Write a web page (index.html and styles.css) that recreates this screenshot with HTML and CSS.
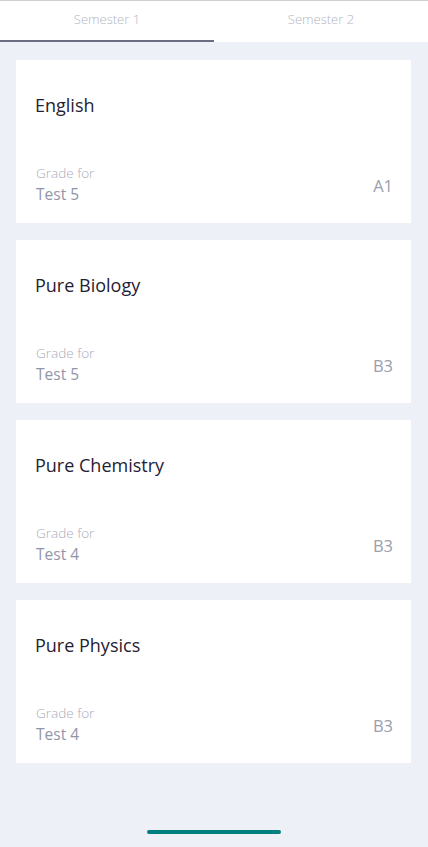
FILE: index.html
```html
<!DOCTYPE html>
<html>
<head>
<meta charset="utf-8">
<link rel="stylesheet" href="styles.css">
</head>
<body>
<div class="screen">
  <div class="tabs">
    <div class="tab active">Semester 1</div>
    <div class="tab">Semester 2</div>
  </div>
  <div class="list">
    <div class="card">
      <div class="title">English</div>
      <div class="foot">
        <div class="meta"><div class="label">Grade for</div><div class="test">Test 5</div></div>
        <div class="grade">A1</div>
      </div>
    </div>
    <div class="card">
      <div class="title">Pure Biology</div>
      <div class="foot">
        <div class="meta"><div class="label">Grade for</div><div class="test">Test 5</div></div>
        <div class="grade">B3</div>
      </div>
    </div>
    <div class="card">
      <div class="title">Pure Chemistry</div>
      <div class="foot">
        <div class="meta"><div class="label">Grade for</div><div class="test">Test 4</div></div>
        <div class="grade">B3</div>
      </div>
    </div>
    <div class="card">
      <div class="title">Pure Physics</div>
      <div class="foot">
        <div class="meta"><div class="label">Grade for</div><div class="test">Test 4</div></div>
        <div class="grade">B3</div>
      </div>
    </div>
  </div>
  <div class="home"></div>
</div>
</body>
</html>
```
FILE: styles.css
```css
* { box-sizing: border-box; }
html, body { margin: 0; padding: 0; }
body {
  font-family: "Open Sans", "Lato", sans-serif;
  background: #edf0f7;
}
.screen {
  height: 847px;
  display: flex;
  flex-direction: column;
  border-top: 1px solid #cfd0d3;
}
.tabs {
  display: flex;
  background: #fff;
  height: 41px;
}
.tab {
  flex: 1;
  display: flex;
  align-items: center;
  justify-content: center;
  font-size: 13px;
  color: #b3b5c3;
  font-weight: 300;
  padding-bottom: 3px;
  border-bottom: 2px solid transparent;
}
.tab.active { border-bottom-color: #6a6e80; }
.list {
  display: flex;
  flex-direction: column;
  gap: 17px;
  padding: 18px 17px 0 16px;
}
.card {
  background: #fff;
  height: 163px;
  padding: 34px 18px 18px 19px;
}
.title {
  font-size: 18px;
  line-height: 22px;
  font-weight: 500;
  color: #1f2233;
}
.foot {
  margin-top: 47px;
  display: flex;
  align-items: center;
  justify-content: space-between;
}
.meta { padding-left: 1px; }
.label {
  font-size: 13.5px;
  line-height: 20px;
  color: #a9acbb;
  font-weight: 300;
}
.test {
  font-size: 15.5px;
  line-height: 22px;
  color: #9195a8;
}
.grade {
  font-size: 16.5px;
  color: #9a9eaf;
  padding-top: 2px;
}
.home {
  margin: auto auto 13px;
  width: 134px;
  height: 4px;
  border-radius: 2px;
  background: #007f7f;
}
```
